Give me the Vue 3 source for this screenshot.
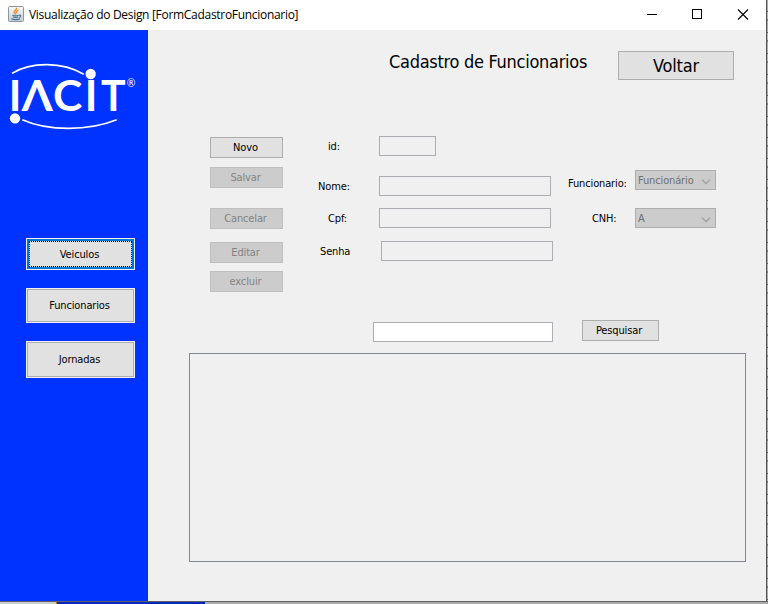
<script setup>
const nav = [
  { text: 'Veiculos', cls: 'veiculos focused' },
  { text: 'Funcionarios', cls: 'funcionarios' },
  { text: 'Jornadas', cls: 'jornadas' },
]
const actions = [
  { text: 'Novo', cls: 'novo', disabled: false },
  { text: 'Salvar', cls: 'salvar', disabled: true },
  { text: 'Cancelar', cls: 'cancelar', disabled: true },
  { text: 'Editar', cls: 'editar', disabled: true },
  { text: 'excluir', cls: 'excluir', disabled: true },
]
const fields = [
  { text: 'id:', cls: 'id' },
  { text: 'Nome:', cls: 'nome' },
  { text: 'Cpf:', cls: 'cpf' },
  { text: 'Senha', cls: 'senha' },
]
const combos = [
  { text: 'Funcionario:', value: 'Funcionário', cls: 'role' },
  { text: 'CNH:', value: 'A', cls: 'cnh' },
]
</script>

<template>
  <div class="desktop">
    <div class="window">
      <header class="titlebar">
        <svg class="java" viewBox="0 0 16 16">
          <defs>
            <linearGradient id="face" x1="0" y1="0" x2="0" y2="1">
              <stop offset="0" stop-color="#f8f8f8" />
              <stop offset="1" stop-color="#c9ced2" />
            </linearGradient>
          </defs>
          <rect x=".5" y=".5" width="15" height="15" rx="1" fill="url(#face)" stroke="#8d969d" />
          <path d="M8.500 1.800C9.500 4 5.300 4.600 6.200 6.600L7.600 8.700M10.600 4C7.400 5.600 8.200 6 8.600 7.200" fill="none" stroke="#e9852c" stroke-width="1.300" />
          <path d="M4.300 9.200c2 .8 4.500.7 6.500 0M5 11c2 .6 3.700.5 5.200 0M3.200 12.800c2.800 1 6.500.9 9 0M11 9.200c2.400-.6 2.400 1.500.3 2.200" fill="none" stroke="#3f7396" stroke-width="1.100" />
        </svg>
        <span class="caption">Visualização do Design [FormCadastroFuncionario]</span>
        <svg class="controls" width="120" height="30" viewBox="0 0 120 30" fill="none" stroke="#000" shape-rendering="crispEdges">
          <path d="M1 14.500h10" />
          <rect x="46.500" y="9.500" width="9" height="9" />
          <path d="M92 9.500l10 10M102 9.500l-10 10" shape-rendering="auto" stroke-width="1.100" />
        </svg>
      </header>
      <div class="body">
        <aside class="sidebar">
          <svg class="logo" viewBox="0 0 444 270" fill="#fff">
            <path d="M36 70C92 35 188 34 251 73" fill="none" stroke="#fff" stroke-width="5" />
            <path d="M67 209C145 244 265 243 350 209" fill="none" stroke="#fff" stroke-width="5" />
            <circle cx="272" cy="72" r="15.500" />
            <circle cx="45" cy="205" r="15.500" />
            <g class="word">
              <text x="26" y="182">I</text>
              <text x="65" y="182" textLength="93" lengthAdjust="spacingAndGlyphs">Λ</text>
              <text x="159" y="182" textLength="88" lengthAdjust="spacingAndGlyphs">C</text>
              <text x="254" y="182">I</text>
              <text x="303" y="182" textLength="74" lengthAdjust="spacingAndGlyphs">T</text>
            </g>
            <text class="reg" x="380" y="110" textLength="26" lengthAdjust="spacingAndGlyphs">®</text>
          </svg>
          <nav class="nav">
            <button v-for="n in nav" :key="n.text" class="nav-btn" :class="n.cls"><span>{{ n.text }}</span></button>
          </nav>
        </aside>
        <main class="content">
          <div class="head">
            <h1>Cadastro de Funcionarios</h1>
            <button class="btn back">Voltar</button>
          </div>
          <div class="form">
            <div class="actions">
              <button v-for="a in actions" :key="a.text" class="btn" :class="a.cls" :disabled="a.disabled">{{ a.text }}</button>
            </div>
            <div class="fields">
              <div v-for="f in fields" :key="f.text" class="field" :class="f.cls">
                <label>{{ f.text }}</label>
                <input disabled />
              </div>
            </div>
            <div class="combos">
              <div v-for="c in combos" :key="c.text" class="combo-row" :class="c.cls">
                <label>{{ c.text }}</label>
                <div class="combo">
                  <span>{{ c.value }}</span>
                  <svg width="10" height="6" viewBox="0 0 10 6"><path d="M1 .7l4 4 4-4" fill="none" stroke="#9a9a9a" stroke-width="1.200" /></svg>
                </div>
              </div>
            </div>
          </div>
          <div class="search">
            <input />
            <button class="btn find">Pesquisar</button>
          </div>
          <div class="table"></div>
        </main>
      </div>
    </div>
    <div class="edge"></div>
    <div class="taskbar"><i class="left"></i><i class="blue"></i><i class="right"></i></div>
  </div>
</template>

<style>
body { margin: 0; overflow: hidden; }
</style>

<style scoped>
* { box-sizing: border-box; }
.desktop {
  width: 768px; height: 604px; display: grid;
  grid-template: 601px 3px / 766px 2px;
  font: 11px/14px "DejaVu Sans Condensed", "DejaVu Sans", sans-serif;
  font-stretch: condensed; letter-spacing: -0.14px; color: #000;
}
.window { display: flex; flex-direction: column; background: #f0f0f0; }
.titlebar { height: 30px; display: flex; align-items: center; background: #fff; padding-left: 8px; }
.java { width: 16px; height: 16px; margin-top: -2px; }
.caption { font: 12px/16px "Open Sans", sans-serif; letter-spacing: -0.3px; margin-left: 5px; white-space: nowrap; }
.controls { margin-left: auto; }
.body { flex: 1; display: flex; }
.sidebar { width: 148px; background: #0033ff; padding-top: 20px; }
.logo { display: block; width: 148px; height: 90px; }
.word { font: 700 128px Lato, sans-serif; letter-spacing: 0; }
.reg { font: 32px Lato, sans-serif; letter-spacing: 0; }
.nav { display: flex; flex-direction: column; gap: 18px; padding: 98px 13px 0 26px; }
button, input { font: inherit; letter-spacing: inherit; color: inherit; margin: 0; padding: 0; border-radius: 0; outline: 0; }
.nav-btn { border: 1px solid #f0f0f0; background: #e1e1e1; height: 32px; display: flex; }
.nav-btn span { flex: 1; align-self: stretch; border: 1px solid #adadad; display: flex; align-items: center; justify-content: center; padding-right: 2px; }
.nav-btn.focused span { border: 2px solid #0078d7; position: relative; padding-top: 2px; }
.focused span::after { content: ''; position: absolute; inset: 0; border: 1px dotted #000; }
.funcionarios { height: 35px; }
.jornadas { height: 37px; }
.content { flex: 1; display: flex; flex-direction: column; }
.head { display: flex; padding: 21px 32px 0 241px; justify-content: space-between; height: 50px; }
h1 { margin: 0; font-size: 18px; line-height: 22px; font-weight: 400; letter-spacing: -0.28px; white-space: nowrap; }
.btn { display: flex; align-items: center; justify-content: center; border: 1px solid #adadad; background: #e1e1e1; height: 21px; padding: 1px 2px 0 0; flex-shrink: 0; }
.btn:disabled { background: #ccc; border-color: #bfbfbf; color: #838383; }
.back { width: 116px; height: 29px; font-size: 18px; padding: 0; }
.form { display: flex; padding: 56px 0 0 62px; height: 242px; }
.actions { width: 73px; padding-top: 1px; }
.actions .btn { width: 73px; }
.salvar { margin-top: 9px; }
.cancelar { margin-top: 20px; }
.editar { margin-top: 13px; }
.excluir { margin-top: 8px; }
.fields { margin-left: 35px; width: 235px; }
.field { display: flex; height: 20px; align-items: center; }
.field label { width: 61px; flex-shrink: 0; padding-top: 2px; }
.field input { width: 172px; height: 20px; border: 1px solid #abadb3; background: #f0f0f0; }
.field.id label, .field.cpf label { padding-left: 10px; }
.field.id input { width: 57px; }
.nome { margin-top: 20px; }
.cpf { margin-top: 12px; }
.senha { margin-top: 13px; }
.field.senha label { width: 63px; padding-left: 2px; }
.combos { padding-top: 34px; margin-left: 15px; }
.combo-row { display: flex; align-items: center; height: 20px; }
.combo-row label { width: 67px; white-space: nowrap; }
.role label { padding-top: 8px; }
.cnh { margin-top: 18px; }
.cnh label { padding: 2px 0 0 24px; }
.combo { width: 81px; height: 20px; background: #ccc; border: 1px solid #adadb0; color: #707070; display: flex; align-items: center; justify-content: space-between; padding: 0 4px 0 2px; }
.combo span { padding-top: 1px; }
.cnh .combo span { padding-top: 2px; }
.combo svg { margin-top: 4px; }
.search { display: flex; padding-left: 225px; height: 31px; }
.search input { width: 180px; height: 20px; border: 1px solid #abadb3; background: #fff; }
.find { width: 77px; margin: -2px 0 0 29px; padding-right: 3px; }
.table { width: 557px; height: 209px; border: 1px solid #828790; margin-left: 41px; }
.edge { border-left: 1px solid #555; background: repeating-linear-gradient(#a9adb1 0 11px, #59636c 11px 12px, #b4b6b8 12px 19px, #73818d 19px 21px); }
.taskbar { grid-column: 1 / 3; border-top: 1px solid #616161; display: flex; }
.left { width: 57px; background: #ccc; border-right: 1px solid #c77a1c; }
.blue { width: 148px; background: #0529bc; }
.right { flex: 1; background: #aaa; }
</style>
